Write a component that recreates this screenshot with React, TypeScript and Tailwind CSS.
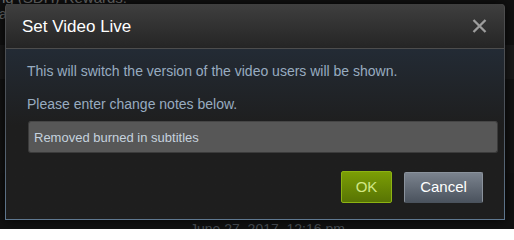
import React from "react"

const font = { fontFamily: '"Liberation Sans", Arial, sans-serif' }

function CloseIcon() {
  return (
    <svg width="15" height="14" viewBox="0 0 15 14" className="block">
      <path d="M1.5 1 L13.5 13 M13.5 1 L1.5 13" stroke="#9d9d9d" strokeWidth="2.3" strokeLinecap="butt" />
    </svg>
  )
}

export default function App() {
  return (
    <div
      className="relative h-[229px] w-[514px] overflow-hidden bg-[#111111] text-[#6f6f6f]"
      style={font}
    >
      {/* page behind the modal */}
      <div className="-mt-[11px] -ml-[3px] text-[15px] leading-[17px] text-[#7a7a7a]">ng (SDH) Rewards:</div>
      <div className="-ml-[1px] text-[14px] leading-[17px] text-[#6a6a6a]">a</div>
      <div className="mt-[22px] h-[34px] bg-[#1a1a1a]" />
      <div className="h-[94px] bg-[#131313]" />
      <div className="mt-[48px] pl-[190px] text-[14px] leading-[16px] text-[#4c5258]">June 27, 2017, 12:16 pm</div>

      {/* modal */}
      <div className="absolute left-[5px] top-[4px] w-[500px] rounded-t-[4px] bg-linear-to-b from-[#4c4c4c] via-[#4c525a] to-[#5f7890] p-px pt-0 shadow-[0_0_12px_rgba(0,0,0,0.8)]">
        <div className="flex h-[45px] items-center justify-between rounded-t-[3px] border-b border-[#4d4d4d] bg-linear-to-b from-[#3f3f3f] to-[#252525] pl-[16px] pr-[17px]">
          <span className="text-[17px] leading-none text-white">Set Video Live</span>
          <CloseIcon />
        </div>
        <div className="h-[170px] bg-linear-to-b from-[#232b35] to-[#1e1e1e] to-45% pl-[21px] pr-[21px] pt-[12px]">
          <p className="text-[14px] leading-[20px] text-[#98acc0]">
            This will switch the version of the video users will be shown.
          </p>
          <p className="mt-[13px] text-[14px] leading-[20px] text-[#98acc0]">Please enter change notes below.</p>
          <div className="ml-px mt-[7px] flex h-[32px] w-[470px] items-center rounded-[3px] border border-[#3b3b3b] border-t-[#464646] bg-[#575757] px-[5px]">
            <span className="text-[13px] leading-none text-[#c5d2de]">Removed burned in subtitles</span>
          </div>
          <div className="mt-[18px] flex justify-end gap-[12px]">
            <button className="flex h-[32px] w-[51px] items-center justify-center rounded-[2px] border border-[#8db312] bg-linear-to-b from-[#7b9e05] to-[#587404] text-[15px] text-[#d2e885]">
              OK
            </button>
            <button className="mt-px flex h-[31px] w-[79px] items-center justify-center rounded-[2px] border border-[#8a929c] border-b-[#4a525c] bg-linear-to-b from-[#7b838e] to-[#4b535e] text-[15px] text-white">
              Cancel
            </button>
          </div>
        </div>
      </div>
    </div>
  )
}
